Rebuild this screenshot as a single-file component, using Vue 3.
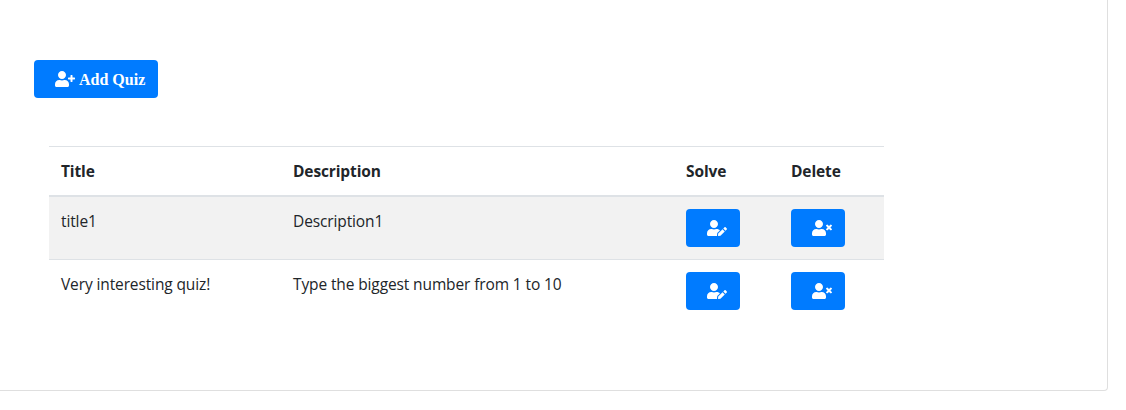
<script setup>
const user =
  'M224 256c70.7 0 128-57.3 128-128S294.7 0 224 0 96 57.3 96 128s57.3 128 128 128zm89.6 32h-16.7c-22.2 10.2-46.9 16-72.9 16s-50.6-5.8-72.9-16h-16.7C60.2 288 0 348.2 0 422.4V464c0 26.5 21.5 48 48 48h352c26.5 0 48-21.5 48-48v-41.6c0-74.2-60.2-134.4-134.4-134.4z'
const icons = {
  add: user + 'M624 208h-64v-64c0-8.8-7.2-16-16-16h-32c-8.8 0-16 7.2-16 16v64h-64c-8.8 0-16 7.2-16 16v32c0 8.8 7.2 16 16 16h64v64c0 8.8 7.2 16 16 16h32c8.8 0 16-7.2 16-16v-64h64c8.8 0 16-7.2 16-16v-32c0-8.8-7.2-16-16-16z',
  remove: user + 'M589.6 240l45.6-45.6c6.3-6.3 6.3-16.5 0-22.8l-22.8-22.8c-6.3-6.3-16.5-6.3-22.8 0L544 194.4l-45.6-45.6c-6.3-6.3-16.5-6.3-22.8 0l-22.8 22.8c-6.3 6.3-6.3 16.5 0 22.8l45.6 45.6-45.6 45.6c-6.3 6.3-6.3 16.5 0 22.8l22.8 22.8c6.3 6.3 16.5 6.3 22.8 0l45.6-45.6 45.6 45.6c6.3 6.3 16.5 6.3 22.8 0l22.8-22.8c6.3-6.3 6.3-16.5 0-22.8L589.6 240z',
  edit: 'M224 256c70.7 0 128-57.3 128-128S294.7 0 224 0 96 57.3 96 128s57.3 128 128 128zm89.6 32h-16.7c-22.2 10.2-46.9 16-72.9 16s-50.6-5.8-72.9-16h-16.7C60.2 288 0 348.2 0 422.4V464c0 26.5 21.5 48 48 48h274.9c-2.4-6.8-3.4-14-2.6-21.3l6.8-60.9 1.2-11.1 7.9-7.9 77.3-77.3c-24.5-27.7-60-45.5-99.9-45.5zm45.3 145.3l-6.8 61c-1.1 10.2 7.5 18.8 17.6 17.6l60.9-6.8 137.9-137.9-71.7-71.7-137.9 137.8zM633 268.9L595.1 231c-9.3-9.3-24.5-9.3-33.8 0l-37.8 37.8-4.1 4.1 71.8 71.7 41.8-41.8c9.3-9.4 9.3-24.5 0-33.9z',
}
const quizzes = [
  { title: 'title1', description: 'Description1' },
  { title: 'Very interesting quiz!', description: 'Type the biggest number from 1 to 10' },
]
</script>

<template>
  <main class="card">
    <button class="btn add">
      <svg class="icon" viewBox="0 0 640 512"><path :d="icons.add" /></svg>
      <span class="label">Add Quiz</span>
    </button>
    <div class="table">
      <div class="row head">
        <div>Title</div>
        <div>Description</div>
        <div>Solve</div>
        <div>Delete</div>
      </div>
      <div v-for="(q, i) in quizzes" :key="q.title" class="row" :class="{ striped: i % 2 === 0 }">
        <div>{{ q.title }}</div>
        <div>{{ q.description }}</div>
        <div>
          <button class="btn" aria-label="Solve">
            <svg class="icon" viewBox="0 0 640 512"><path :d="icons.edit" /></svg>
          </button>
        </div>
        <div>
          <button class="btn" aria-label="Delete">
            <svg class="icon" viewBox="0 0 640 512"><path :d="icons.remove" /></svg>
          </button>
        </div>
      </div>
    </div>
  </main>
</template>

<style>
body {
  background: #fff;
}
</style>

<style scoped>
.card {
  box-sizing: border-box;
  width: 1108px;
  height: 391px;
  padding: 60px 0 0 34px;
  border: solid #dfdfdf;
  border-width: 0 1px 1px 0;
  border-bottom-right-radius: 4px;
  color: #212529;
  font: 15.5px/24px "Open Sans", "Noto Sans", sans-serif;
  letter-spacing: -0.12px;
}
.btn {
  display: flex;
  align-items: center;
  box-sizing: border-box;
  width: 54px;
  height: 38px;
  padding: 0 0 0 21px;
  border: 0;
  border-radius: 4px;
  background: #007bff;
  color: #fff;
}
.add {
  width: 124px;
}
.icon {
  flex: none;
  width: 20px;
  height: 16px;
  fill: currentColor;
}
.label {
  margin-left: 4px;
  padding-top: 2px;
  font: bold 16px/24px "Liberation Serif", serif;
  white-space: nowrap;
}
.table {
  width: 835px;
  margin: 48px 0 0 15px;
}
.row {
  display: grid;
  grid-template-columns: 232px 393px 105px 105px;
  box-sizing: border-box;
  height: 63px;
  border-top: 1px solid #dee2e6;
  white-space: nowrap;
}
.row > div {
  padding: 12px 0 0 12px;
}
.row.striped {
  height: 62px;
  border-top: 0;
  background: #f2f2f2;
}
.row.head {
  height: 51px;
  border-bottom: 2px solid #dee2e6;
  font-weight: 700;
}
</style>
